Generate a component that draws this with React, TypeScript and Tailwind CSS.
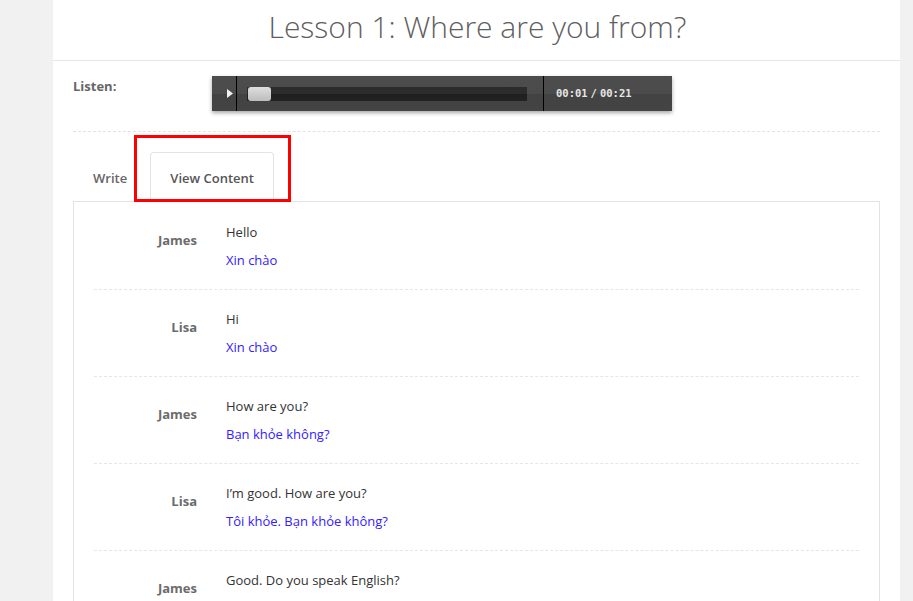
import React from "react";

type Line = { name: string; en: string; vi?: string };

const LINES: Line[] = [
	{ name: "James", en: "Hello", vi: "Xin chào" },
	{ name: "Lisa", en: "Hi", vi: "Xin chào" },
	{ name: "James", en: "How are you?", vi: "Bạn khỏe không?" },
	{ name: "Lisa", en: "I’m good. How are you?", vi: "Tôi khỏe. Bạn khỏe không?" },
	{ name: "James", en: "Good. Do you speak English?" },
];

function Player() {
	return (
		<div className="flex h-[35px] w-[460px] bg-[linear-gradient(#4d4d4d_0%,#4b4b4b_50%,#424242_50%,#444444_100%)] shadow-[0_2px_4px_rgba(0,0,0,0.35)]">
			<div className="flex w-[25px] items-center justify-end pr-[3px] border-r border-black">
				<svg width="6" height="9" viewBox="0 0 6 9">
					<path d="M0 0 L6 4.5 L0 9 Z" fill="#f2f2f2" />
				</svg>
			</div>
			<div className="flex w-[307px] items-center pl-[10px] pr-[16px] border-r border-black">
				<div className="relative h-[14px] w-full bg-[linear-gradient(#2c2c2c_0%,#2c2c2c_50%,#1f1f1f_50%,#222_100%)]">
					<div className="absolute left-[1px] top-0 h-[14px] w-[23px] rounded-[3px] bg-[linear-gradient(#dedede,#bdbdbd)]" />
				</div>
			</div>
			<div className="flex items-center pl-[12px] font-['DejaVu_Sans_Mono',monospace] text-[10.5px] font-bold text-[#e6e6e6]">
				<span>00:01</span>
				<span className="px-[3px]">/</span>
				<span>00:21</span>
			</div>
		</div>
	);
}

export default function App() {
	return (
		<div className="h-[601px] overflow-hidden bg-[#f1f1f1] font-['Open_Sans',sans-serif]">
			<div className="ml-[53px] w-[847px] min-h-[601px] bg-white">
				<div className="flex h-[61px] items-center justify-center border-b border-[#e6e6e6]">
					<h1 className="pl-[2px] pb-[8px] text-[30px] font-light text-[#5e5e5e]">
						Lesson 1: Where are you from?
					</h1>
				</div>

				<div className="px-[20px]">
					<div className="flex pt-[15px] pb-[20px] border-b border-dashed border-[#e3e3e3]">
						<div className="w-[139px] pt-[1px] text-[13px] font-bold text-[#666]">Listen:</div>
						<Player />
					</div>

					<div className="relative mt-[20px] flex items-end">
						<div className="pl-[20px] pr-[23px] pb-[13px] text-[13px] font-semibold text-[#666]">Write</div>
						<div className="relative z-10 -mb-px flex h-[50px] w-[124px] items-center justify-center rounded-t-[4px] border border-b-0 border-[#e3e3e3] bg-white pt-[2px] text-[13px] font-semibold text-[#555]">
							View Content
						</div>
						<div className="pointer-events-none absolute left-[61px] top-[-17px] z-20 h-[67px] w-[157px] border-[3px] border-[#ff0000]" />
					</div>

					<div className="border border-[#e3e3e3] px-[20px] pt-px">
						{LINES.map((l, i) => (
							<div key={i} className="flex py-[19px] border-b border-dashed border-[#e6e6e6] text-[13px] leading-[20px]">
								<div className="w-[103px] pt-[8px] text-right font-bold text-[#6b6b6b]">{l.name}</div>
								<div className="pl-[29px]">
									<div className="text-[#333]">{l.en}</div>
									{l.vi && <div className="mt-[8px] text-[#3420ff]">{l.vi}</div>}
								</div>
							</div>
						))}
					</div>
				</div>
			</div>
		</div>
	);
}
